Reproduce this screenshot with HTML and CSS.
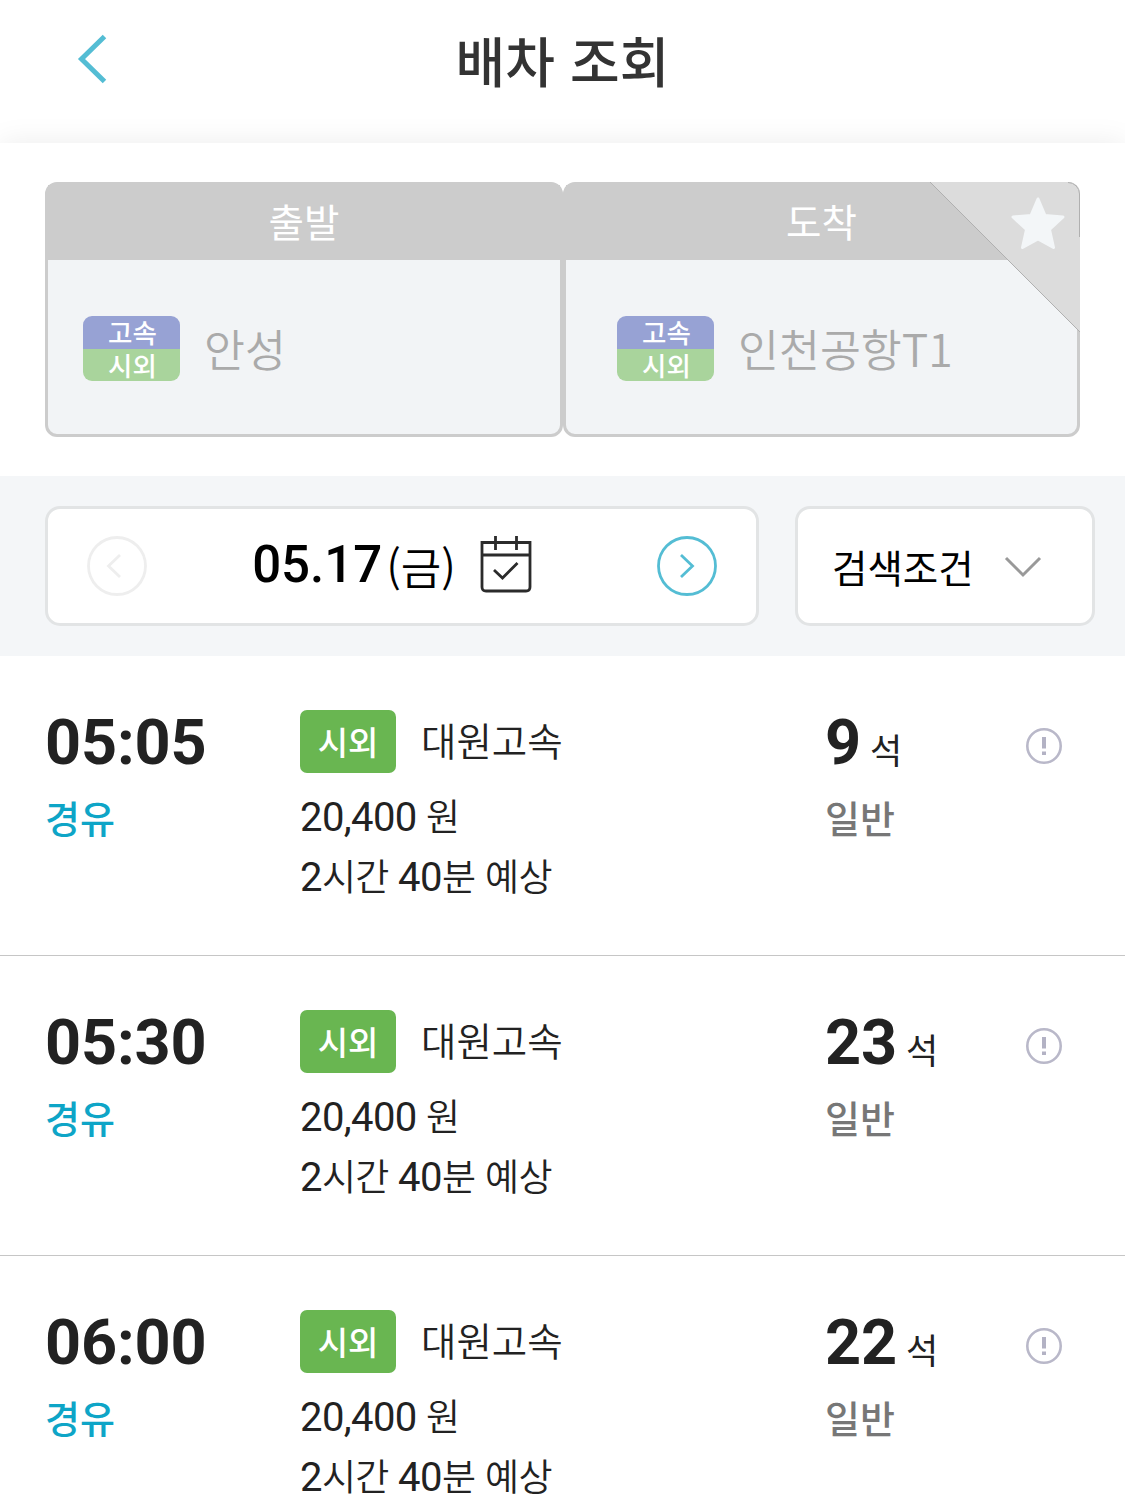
FILE: index.html
```html
<!DOCTYPE html>
<html lang="ko">
<head>
<meta charset="utf-8">
<title>배차 조회</title>
<link rel="stylesheet" href="styles.css">
</head>
<body>
<header class="topbar">
  <svg class="back" width="36" height="56" viewBox="0 0 36 56" fill="none" stroke="#54bdd4" stroke-width="5"><path d="M31.500 6.500 8.500 29 31.500 51.500"/></svg>
  <h1 class="title">배차 조회</h1>
</header>
<main>
  <section class="route">
    <div class="stop">
      <div class="stop-head">출발</div>
      <div class="stop-body">
        <div class="kinds"><span class="kind express">고속</span><span class="kind intercity">시외</span></div>
        <span class="station">안성</span>
      </div>
    </div>
    <div class="stop arrive">
      <div class="stop-head">도착</div>
      <div class="stop-body">
        <div class="kinds"><span class="kind express">고속</span><span class="kind intercity">시외</span></div>
        <span class="station">인천공항T1</span>
      </div>
      <svg class="corner" width="150" height="150" viewBox="0 0 150 150">
        <path d="M0 0H138A12 12 0 0 1 150 12V150Z" fill="#dcdcdc"/>
        <path d="M0 0 150 150M138 .5A11.500 11.500 0 0 1 149.500 12V55" fill="none" stroke="#b0b0b0" stroke-width="1"/>
        <path d="M108 17 115 33.500 133 35 119.500 47.500 123.500 65.500 108 57 92.500 65.500 96.500 47.500 83 35 101 33.500Z" fill="#f3f6f8" stroke="#f3f6f8" stroke-width="3" stroke-linejoin="round"/>
      </svg>
    </div>
  </section>

  <section class="filters">
    <div class="date-box">
      <svg width="60" height="60" viewBox="0 0 60 60" fill="none" stroke="#eee" stroke-width="2.800"><circle cx="30" cy="30" r="28.500"/><path d="M33 19 21.500 30 33 41"/></svg>
      <div class="date"><b class="day">05.17</b><span class="weekday">(금)</span>
        <svg class="calendar" width="52" height="58" viewBox="0 0 52 58" fill="none" stroke="#2b2b2b" stroke-width="2.800"><path d="M2 7.500H50V52Q50 56 46 56H6Q2 56 2 52ZM2 20H50M15.500 1V15M36.500 1V15M14 35 22.500 43 37.500 28"/></svg>
      </div>
      <svg width="60" height="60" viewBox="0 0 60 60" fill="none" stroke="#54bdd4" stroke-width="2.800"><circle cx="30" cy="30" r="28.500"/><path d="M24 19 35.500 30 24 41"/></svg>
    </div>
    <div class="option-box">
      <span class="option">검색조건</span>
      <svg class="chevron" width="38" height="22" viewBox="0 0 38 22" fill="none" stroke="#999" stroke-width="3"><path d="M2 2 19 19 36 2"/></svg>
    </div>
  </section>

  <ul class="buses">
    <li class="bus">
      <div><div class="time">05:05</div><div class="via">경유</div></div>
      <div>
        <div class="company"><span class="badge">시외</span><span class="name">대원고속</span></div>
        <div class="line">20,400 <span class="ko">원</span></div>
        <div class="line">2<span class="ko">시간</span> 40<span class="ko">분 예상</span></div>
      </div>
      <div><div class="seats">9<span class="unit">석</span></div><div class="grade">일반</div></div>
      <svg class="info" width="36" height="36" viewBox="0 0 36 36"><circle cx="18" cy="18" r="16.700" fill="none" stroke="#b9b8c9" stroke-width="2.600"/><path d="M16 9H20V20.500H16ZM16 23.500H20V27H16Z" fill="#b3b2c4"/></svg>
    </li>
    <li class="bus">
      <div><div class="time">05:30</div><div class="via">경유</div></div>
      <div>
        <div class="company"><span class="badge">시외</span><span class="name">대원고속</span></div>
        <div class="line">20,400 <span class="ko">원</span></div>
        <div class="line">2<span class="ko">시간</span> 40<span class="ko">분 예상</span></div>
      </div>
      <div><div class="seats">23<span class="unit">석</span></div><div class="grade">일반</div></div>
      <svg class="info" width="36" height="36" viewBox="0 0 36 36"><circle cx="18" cy="18" r="16.700" fill="none" stroke="#b9b8c9" stroke-width="2.600"/><path d="M16 9H20V20.500H16ZM16 23.500H20V27H16Z" fill="#b3b2c4"/></svg>
    </li>
    <li class="bus">
      <div><div class="time">06:00</div><div class="via">경유</div></div>
      <div>
        <div class="company"><span class="badge">시외</span><span class="name">대원고속</span></div>
        <div class="line">20,400 <span class="ko">원</span></div>
        <div class="line">2<span class="ko">시간</span> 40<span class="ko">분 예상</span></div>
      </div>
      <div><div class="seats">22<span class="unit">석</span></div><div class="grade">일반</div></div>
      <svg class="info" width="36" height="36" viewBox="0 0 36 36"><circle cx="18" cy="18" r="16.700" fill="none" stroke="#b9b8c9" stroke-width="2.600"/><path d="M16 9H20V20.500H16ZM16 23.500H20V27H16Z" fill="#b3b2c4"/></svg>
    </li>
  </ul>
</main>
</body>
</html>
```
FILE: styles.css
```css
* { box-sizing: border-box; }
html, body { height: 1504px; overflow: hidden; }
body {
  margin: 0;
  background: #fff;
  color: #222;
  font-family: "Noto Sans CJK KR", sans-serif;
}
svg { display: block; flex: none; }

.topbar {
  display: grid;
  grid-template-columns: 110px 1fr 110px;
  height: 143px;
}
.back { margin: 30px 0 0 73px; }
.title {
  margin: 0;
  text-align: center;
  font-size: 54px;
  font-weight: 500;
  line-height: 120px;
  color: #333;
}
main { background: #fff; box-shadow: 0 0 28px rgba(0, 0, 0, .08); }

.route {
  display: grid;
  grid-template-columns: 518px 517px;
  height: 333px;
  padding: 39px 45px 39px;
}
.stop {
  position: relative;
  display: flex;
  flex-direction: column;
  border: 3px solid #ccc;
  border-radius: 12px;
  background: #f2f4f6;
}
.stop-head {
  height: 75px;
  background: #ccc;
  color: #fff;
  font-size: 38.5px;
  line-height: 70px;
  text-align: center;
}
.stop-body {
  display: flex;
  flex: 1;
  align-items: flex-start;
  padding: 56px 0 0 35px;
}
.arrive .stop-body { padding-left: 51px; }
.kinds {
  display: flex;
  flex-direction: column;
  width: 97px;
  height: 65px;
  margin-right: 24px;
}
.kind {
  padding-left: 2px;
  color: #fff;
  font-size: 26.500px;
  font-weight: 500;
  text-align: center;
}
.express { height: 33px; line-height: 31px; background: #97a2d4; border-radius: 9px 9px 0 0; }
.intercity { height: 32px; line-height: 31px; background: #a9d49c; border-radius: 0 0 9px 9px; }
.station {
  font-size: 44.500px;
  line-height: 63px;
  font-weight: 350;
  color: #aaa;
}
.corner { position: absolute; top: -3px; right: -3px; }

.filters {
  display: flex;
  gap: 36px;
  height: 180px;
  padding: 30px 30px 30px 45px;
  background: #f4f6f8;
}
.date-box, .option-box {
  display: flex;
  align-items: center;
  justify-content: space-between;
  border: 3px solid #e2e4e5;
  border-radius: 15px;
  background: #fff;
  color: #000;
}
.date-box { width: 714px; padding: 0 39px; }
.date { display: flex; align-items: center; margin-right: 20px; }
.day {
  font: 500 51px/112px Roboto, sans-serif;
  margin-bottom: 2px;
}
.weekday { margin-left: 4px; font-size: 44px; line-height: 112px; font-weight: 350; }
.calendar { margin: 0 0 4px 24px; }
.option-box { flex: 1; padding: 0 50px 0 34px; }
.option { font-size: 38.500px; line-height: 114px; }
.chevron { margin-top: 2px; }

.buses { margin: 0; padding: 0; list-style: none; }
.bus {
  display: grid;
  grid-template-columns: 255px 525px 200px 36px;
  height: 300px;
  padding: 54px 46px 0 45px;
  border-bottom: 1px solid #c6c6c6;
}
.time, .seats {
  height: 63px;
  margin-bottom: 14px;
  font: 700 63px/65px Roboto, sans-serif;
  letter-spacing: -.2px;
}
.via, .grade { font-size: 38px; font-weight: 500; line-height: 59px; }
.via { color: #0ea5c7; }
.grade { color: #777; }
.unit {
  margin-left: 9px;
  font: 400 35px/1 "Noto Sans CJK KR", sans-serif;
}
.company { display: flex; height: 63px; margin-bottom: 14px; }
.badge {
  width: 96px;
  margin-right: 25px;
  border-radius: 7px;
  background: #69b651;
  color: #fff;
  font-size: 33px;
  font-weight: 500;
  line-height: 62px;
  text-align: center;
}
.name { font-size: 38.500px; font-weight: 350; line-height: 58px; }
.line {
  height: 60px;
  font: 400 40px/62px Roboto, sans-serif;
  letter-spacing: -.6px;
  white-space: pre;
}
.ko { font: 350 37px/1 "Noto Sans CJK KR", sans-serif; }
.info { margin: 18px 0 0 1px; }
```
